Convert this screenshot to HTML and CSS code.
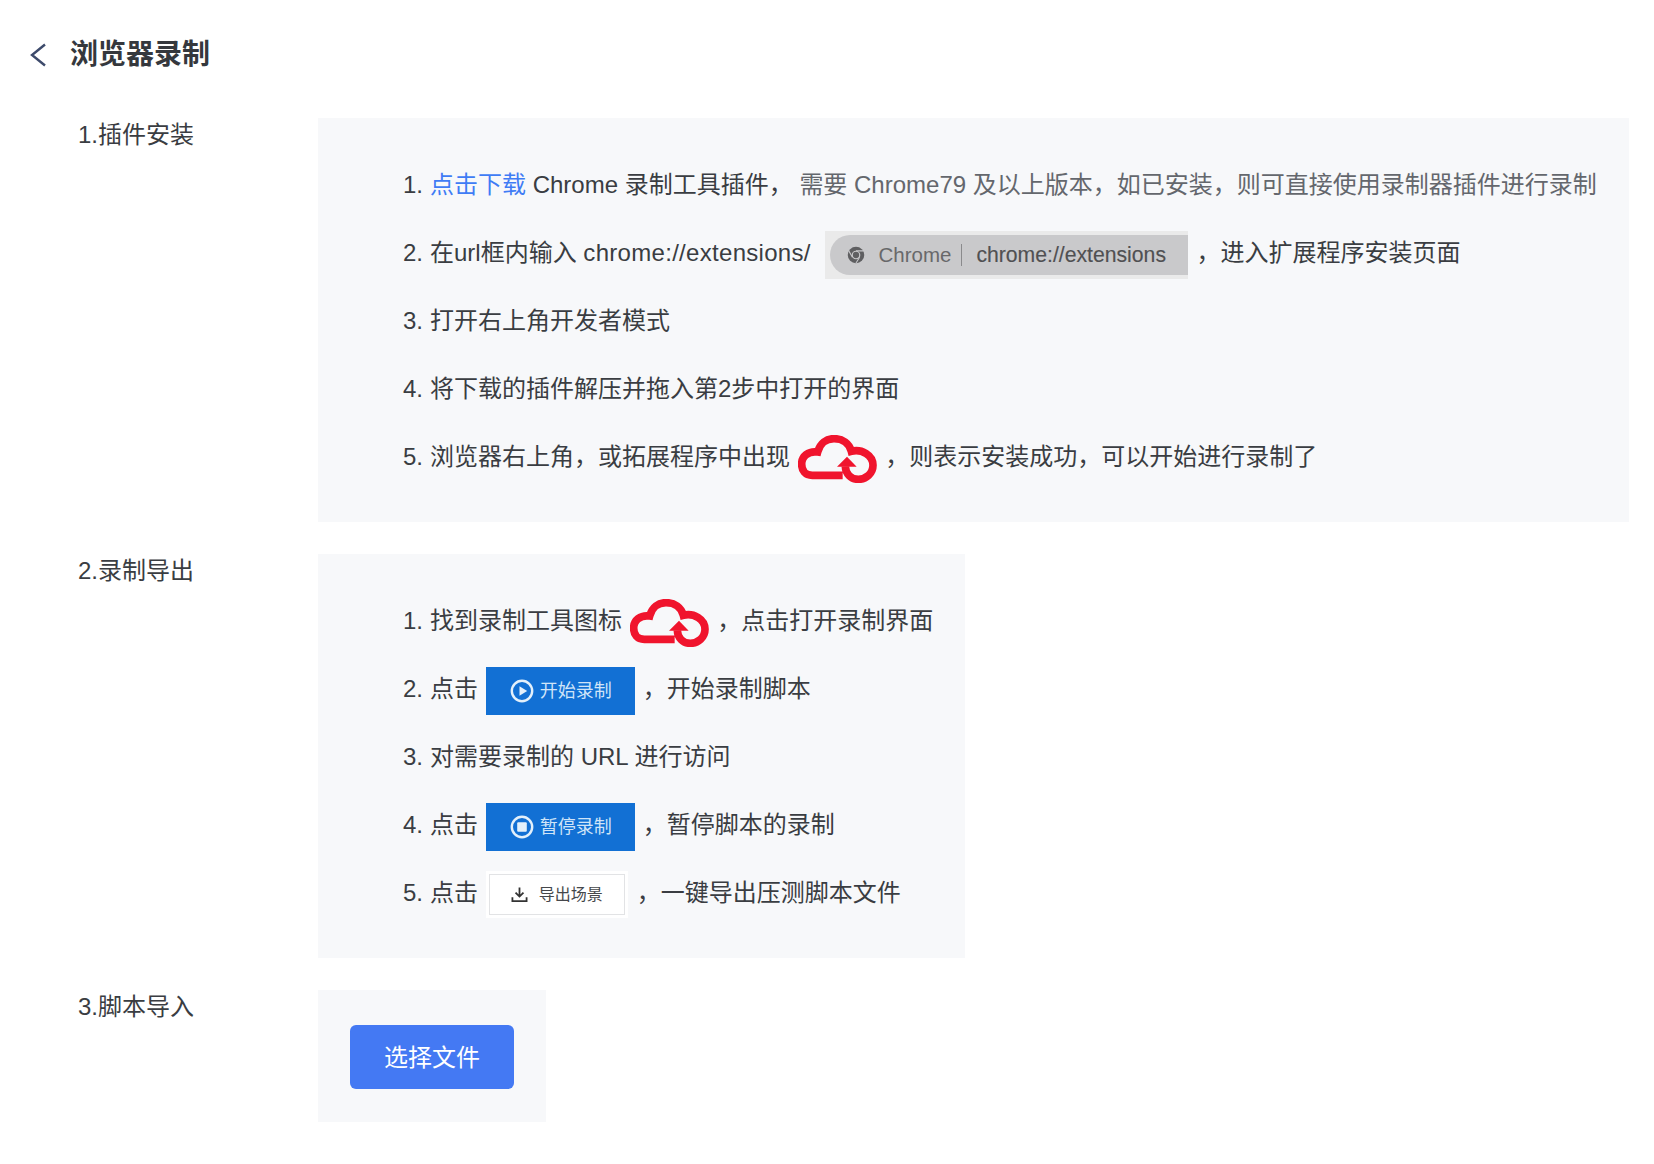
FILE: index.html
```html
<!DOCTYPE html>
<html lang="zh-CN">
<head>
<meta charset="utf-8">
<title>浏览器录制</title>
<link rel="stylesheet" href="styles.css">
</head>
<body>
<svg class="defs" width="0" height="0" aria-hidden="true">
  <symbol id="cloud" viewBox="54 44 237 144">
    <path d="M188 165H97C75 165 65 150 65 131C65 108 85 91 113 95C120 68 140 55 162 55C188 55 208 70 214 93C245 85 279 105 279 135C279 160 258 177 235 177C212 177 197 160 196 138" fill="none" stroke="#f0142d" stroke-width="23"/>
    <path d="M171 139L201 109L230 139Z" fill="#f0142d"/>
  </symbol>
</svg>
<header class="head">
  <svg class="back" viewBox="0 0 16 24" aria-hidden="true"><path d="M15 1.5L2 12L15 22.5" fill="none" stroke="#3d4a6b" stroke-width="2.4"/></svg>
  <h1>浏览器录制</h1>
</header>
<main>
  <section class="row">
    <h2>1.插件安装</h2>
    <ol class="panel wide">
      <li><span class="num">1.</span><a href="#">点击下载</a> Chrome 录制工具插件， <span class="muted">需要 Chrome79 及以上版本，如已安装，则可直接使用录制器插件进行录制</span></li>
      <li><span class="num">2.</span>在url框内输入 <span class="cmd">chrome://extensions/</span>
        <span class="url">
          <span class="pill">
            <svg class="chrome" viewBox="0 0 24 24" aria-hidden="true"><circle cx="12" cy="12" r="11" fill="#5f5f61"/><path d="M12 6.5H22M7.2 15L2.4 6.5M16.8 15L11.8 23" stroke="#c9c9cb" stroke-width="1.4"/><circle cx="12" cy="12" r="5" fill="#5f5f61" stroke="#c9c9cb" stroke-width="1.6"/></svg>
            <span class="host">Chrome</span><span class="bar"></span><span class="path">chrome://extensions</span>
          </span>
        </span><span class="after">，进入扩展程序安装页面</span></li>
      <li><span class="num">3.</span>打开右上角开发者模式</li>
      <li><span class="num">4.</span>将下载的插件解压并拖入第2步中打开的界面</li>
      <li><span class="num">5.</span>浏览器右上角，或拓展程序中出现 <svg class="cloud" aria-hidden="true"><use href="#cloud"/></svg> ，则表示安装成功，可以开始进行录制了</li>
    </ol>
  </section>
  <section class="row">
    <h2>2.录制导出</h2>
    <ol class="panel mid">
      <li><span class="num">1.</span>找到录制工具图标 <svg class="cloud" aria-hidden="true"><use href="#cloud"/></svg> ，点击打开录制界面</li>
      <li><span class="num">2.</span>点击
        <span class="shot">
          <svg viewBox="0 0 24 24" aria-hidden="true"><circle cx="12" cy="12" r="10.2" fill="none" stroke="#e3f0fb" stroke-width="2.4"/><path d="M9.5 7.2L17.2 12L9.5 16.8Z" fill="#e3f0fb"/></svg>开始录制
        </span><span class="after">，开始录制脚本</span></li>
      <li><span class="num">3.</span>对需要录制的 URL 进行访问</li>
      <li><span class="num">4.</span>点击
        <span class="shot">
          <svg viewBox="0 0 24 24" aria-hidden="true"><circle cx="12" cy="12" r="10.2" fill="none" stroke="#e3f0fb" stroke-width="2.4"/><rect x="7.2" y="7.2" width="9.6" height="9.6" rx="1" fill="#e3f0fb"/></svg>暂停录制
        </span><span class="after">，暂停脚本的录制</span></li>
      <li><span class="num">5.</span>点击
        <span class="export">
          <span class="export-in">
            <svg viewBox="0 0 18 18" aria-hidden="true"><path d="M9 1.5V11M4.8 7L9 11.2L13.2 7M1.5 12V16H16.5V12" fill="none" stroke="#333" stroke-width="1.9"/></svg>导出场景
          </span>
        </span><span class="after2">，一键导出压测脚本文件</span></li>
    </ol>
  </section>
  <section class="row">
    <h2>3.脚本导入</h2>
    <div class="panel small"><button type="button" class="primary">选择文件</button></div>
  </section>
</main>
</body>
</html>
```
FILE: styles.css
```css
* { box-sizing: border-box; }
html, body { margin: 0; padding: 0; background: #fff; }
body {
  width: 1654px;
  height: 1164px;
  overflow: hidden;
  font-family: "Liberation Sans", "Noto Sans CJK SC", sans-serif;
  color: #3a3d42;
  font-size: 24px;
}
.defs { position: absolute; }
.head {
  display: flex;
  align-items: center;
  height: 118px;
  padding: 0 0 9px 30px;
}
.back { width: 16px; height: 24px; margin-right: 24px; }
h1 { margin: 0; font-size: 28px; line-height: 1.2; font-weight: 700; color: #35383d; }
main { display: flex; flex-direction: column; gap: 32px; padding-right: 25px; }
.row { display: grid; grid-template-columns: 318px 1fr; align-items: start; }
h2 {
  margin: 0;
  padding: 0 0 0 78px;
  font-size: 24px;
  line-height: 34px;
  font-weight: 400;
}
.panel {
  background: #f7f8fa;
  margin: 0;
  list-style: none;
}
ol.panel { padding: 33px 0 31px 85px; }
.wide { width: 100%; }
.mid { width: 647px; }
.small { width: 228px; height: 132px; padding: 35px 0 0 32px; }
li { height: 68px; line-height: 68px; white-space: nowrap; }
.num { display: inline-block; width: 27px; }
a { color: #3f7cf5; text-decoration: none; }
.muted { color: #64676d; }
.cmd { letter-spacing: 0.3px; }
.url {
  display: inline-flex;
  vertical-align: middle;
  width: 363px;
  height: 48px;
  margin: 0 0 0 8px;
  padding: 4px 0 4px 5px;
  background: #eaeaea;
}
.pill {
  display: flex;
  align-items: center;
  flex: 1;
  padding-left: 17px;
  background: #c9c9cb;
  border-radius: 20px 0 0 20px;
  font-size: 20.5px;
}
.chrome { width: 18px; height: 18px; margin-right: 13px; }
.host { color: #68686a; }
.bar { width: 1px; height: 22px; margin: 0 14px 0 10px; background: #8a8a8c; }
.path { color: #505052; font-size: 21.2px; -webkit-text-stroke: 0.15px #505052; }
.after { margin-left: 8px; }
.after2 { margin-left: 9px; }
.cloud { width: 79px; height: 48px; vertical-align: middle; margin: 0 2px 0 1px; }
.shot {
  display: inline-flex;
  align-items: center;
  vertical-align: middle;
  width: 149px;
  height: 48px;
  margin-left: 1px;
  padding-left: 24px;
  background: #1270d4;
  color: #cfe4f8;
  font-size: 18px;
}
.shot svg { width: 24px; height: 24px; margin-right: 6px; }
.export {
  display: inline-block;
  vertical-align: middle;
  width: 142px;
  height: 47px;
  margin-left: 1px;
  padding: 3px;
  background: #fff;
}
.export-in {
  display: flex;
  align-items: center;
  height: 100%;
  padding-left: 21px;
  border: 1px solid #e2e3e5;
  font-size: 16px;
  color: #45474b;
}
.export-in svg { width: 17px; height: 17px; margin-right: 11px; }
.primary {
  display: block;
  width: 164px;
  height: 64px;
  padding: 0 0 4px;
  border: 0;
  border-radius: 6px;
  background: #4479f3;
  color: #fff;
  font: inherit;
}
```
